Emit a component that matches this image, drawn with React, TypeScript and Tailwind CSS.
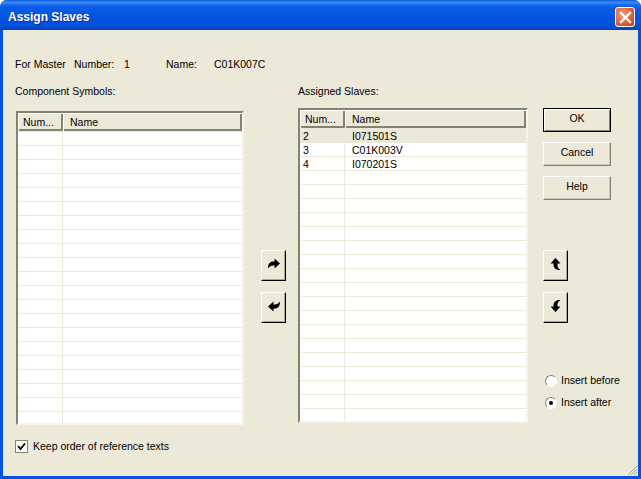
const rowLines = Array.from({ length: 21 });

function ArrowIcon({ rotate = "" }: { rotate?: string }) {
  return (
    <svg viewBox="0 0 12 12" className={`h-[12px] w-[12px] ${rotate}`}>
      <path d="M6.5 0.5 L12 5.5 L6.5 10.5 V7.5 H5 C3 7.5 1.5 8.5 0.5 10 H0 C0 6 2 3.5 5 3.5 H6.5 Z" fill="#000" />
    </svg>
  );
}

function Btn({ label, isDefault }: { label: string; isDefault?: boolean }) {
  return (
    <button
      className={`flex h-[24px] w-[68px] items-center justify-center border bg-[#ece9d8] pb-[2px] ${
        isDefault
          ? "border-black shadow-[inset_1px_1px_0_#fff,inset_-1px_-1px_0_#85826f]"
          : "border-b-[#85826f] border-l-white border-r-[#85826f] border-t-white shadow-[inset_-1px_-1px_0_#c9c6b5]"
      }`}
    >
      {label}
    </button>
  );
}

function IconBtn({ children }: { children: React.ReactNode }) {
  return (
    <button className="flex h-[31px] w-[25px] items-center justify-center border border-b-black border-l-white border-r-black border-t-white bg-[#ece9d8] pb-[3px] shadow-[inset_-1px_-1px_0_#aca899]">
      {children}
    </button>
  );
}

function SlaveList({ rows, height }: { rows: string[][]; height: string }) {
  return (
    <div className={`flex flex-col overflow-hidden border-2 border-b-[#f5f3ea] border-l-[#85826f] border-r-[#f5f3ea] border-t-[#85826f] bg-white ${height}`}>
      <div className="flex h-[19px] shrink-0 bg-[#ece9d8] pb-px">
        <div className="flex w-[45px] items-center border-l border-t border-white pl-[4px] shadow-[inset_-2px_-2px_0_#85826f]">Num...</div>
        <div className="flex flex-1 items-center border-l border-t border-white pl-[6px] shadow-[inset_-2px_-2px_0_#85826f]">Name</div>
      </div>
      {rowLines.map((_, i) => (
        <div key={i} className={`flex h-[14px] shrink-0 border-b border-[#ece9d8] leading-[15px] ${i === 0 && rows.length > 0 ? "bg-[#ece9d8]" : ""}`}>
          <div className="w-[45px] border-r border-[#ece9d8] pl-[3px]">{rows[i]?.[0]}</div>
          <div className="flex-1 pl-[7px]">{rows[i]?.[1]}</div>
        </div>
      ))}
    </div>
  );
}

export default function App() {
  return (
    <div className="flex h-[479px] w-[641px] flex-col overflow-hidden rounded-t-[7px] bg-[#0153e3] font-['Liberation_Sans',sans-serif] text-black">
      {/* title bar */}
      <div className="flex h-[30px] shrink-0 items-center justify-between bg-[linear-gradient(180deg,#0a5be0_0%,#3c8cf5_8%,#0a5fe8_20%,#0354e2_55%,#0250dc_85%,#0242b8_100%)] pl-[8px] pr-[6px] pt-[4px]">
        <span className="text-[12px] font-bold text-white [text-shadow:1px_1px_0_#0f2f8f]">Assign Slaves</span>
        <button className="flex h-[20px] w-[20px] items-center justify-center rounded-[3px] border border-white bg-[radial-gradient(circle_at_35%_35%,#ee9a7d,#d9512b_70%,#c23f1c)]">
          <svg viewBox="0 0 13 13" className="h-[13px] w-[13px]">
            <path d="M2 2 L11 11 M11 2 L2 11" stroke="#fff" strokeWidth="2.4" strokeLinecap="square" fill="none" />
          </svg>
        </button>
      </div>

      {/* dialog body */}
      <div className="relative mx-[3px] mb-[3px] flex flex-1 flex-col bg-[#ece9d8] pl-[13px] pt-[28px] text-[10.5px]">
        <div className="-ml-px flex h-[14px] items-center">
          <span className="w-[59px]">For Master</span>
          <span className="w-[50px]">Number:</span>
          <span className="w-[42px]">1</span>
          <span className="w-[48px]">Name:</span>
          <span>C01K007C</span>
        </div>

        <div className="mt-[12px] flex">
          <div className="flex w-[228px] flex-col">
            <div className="-ml-px h-[14px]">Component Symbols:</div>
            <div className="mt-[13px]">
              <SlaveList rows={[]} height="h-[314px]" />
            </div>
            <label className="-ml-px mt-[14px] flex items-center gap-[5px]">
              <span className="flex h-[13px] w-[13px] items-center justify-center border border-[#85826f] bg-white">
                <svg viewBox="0 0 9 9" className="h-[9px] w-[9px]">
                  <path d="M1 4 L3.5 7 L8 1.5" stroke="#000" strokeWidth="1.8" fill="none" />
                </svg>
              </span>
              Keep order of reference texts
            </label>
          </div>

          <div className="ml-[17px] flex w-[25px] flex-col gap-[11px] pt-[166px]">
            <IconBtn><ArrowIcon /></IconBtn>
            <IconBtn><ArrowIcon rotate="rotate-180" /></IconBtn>
          </div>

          <div className="ml-[12px] flex w-[230px] flex-col">
            <div className="h-[14px]">Assigned Slaves:</div>
            <div className="mt-[10px]">
              <SlaveList
                rows={[
                  ["2", "I071501S"],
                  ["3", "C01K003V"],
                  ["4", "I070201S"],
                ]}
                height="h-[315px]"
              />
            </div>
          </div>

          <div className="ml-[15px] flex flex-col pt-[24px]">
            <div className="flex flex-col gap-[10px]">
              <Btn label="OK" isDefault />
              <Btn label="Cancel" />
              <Btn label="Help" />
            </div>
            <div className="mt-[50px] flex flex-col gap-[11px]">
              <IconBtn><ArrowIcon rotate="-rotate-90" /></IconBtn>
              <IconBtn><ArrowIcon rotate="rotate-90 -scale-y-100" /></IconBtn>
            </div>
            <div className="mt-[51px] flex flex-col gap-[9px] pl-[2px]">
              <label className="flex h-[13px] items-center gap-[4px] whitespace-nowrap">
                <span className="h-[12px] w-[12px] rounded-full border border-b-white border-l-[#85826f] border-r-white border-t-[#85826f] bg-white" />
                Insert before
              </label>
              <label className="flex h-[13px] items-center gap-[4px] whitespace-nowrap">
                <span className="flex h-[12px] w-[12px] items-center justify-center rounded-full border border-b-white border-l-[#85826f] border-r-white border-t-[#85826f] bg-white">
                  <span className="h-[4px] w-[4px] rounded-full bg-black" />
                </span>
                Insert after
              </label>
            </div>
          </div>
        </div>

        {/* resize grip */}
        <svg viewBox="0 0 12 12" className="absolute bottom-0 right-0 h-[12px] w-[12px]">
          <path d="M11 2 L2 11 M11 5 L5 11 M11 8 L8 11" stroke="#aca899" strokeWidth="1" fill="none" />
        </svg>
      </div>
    </div>
  );
}
